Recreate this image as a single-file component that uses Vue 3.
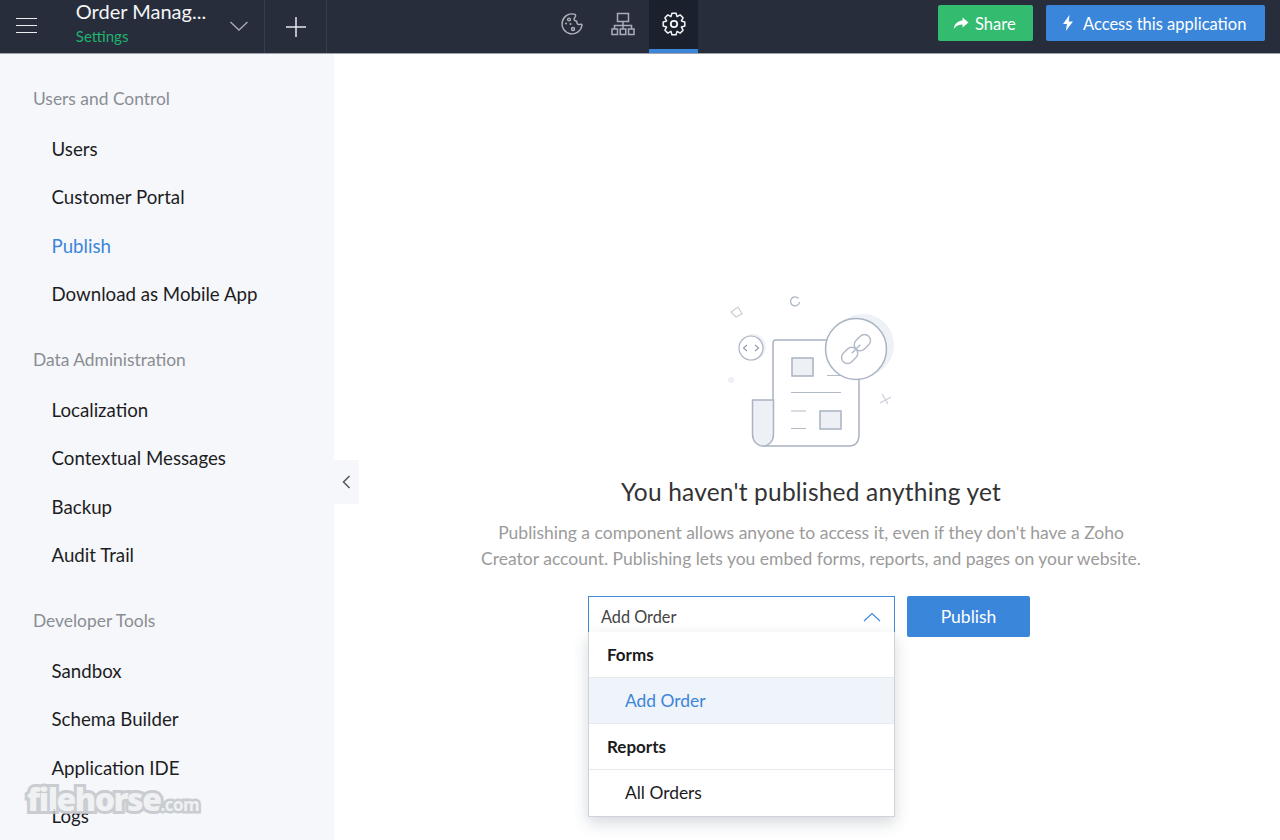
<script setup>
const groups = [
  { title: 'Users and Control', items: ['Users', 'Customer Portal', 'Publish', 'Download as Mobile App'] },
  { title: 'Data Administration', items: ['Localization', 'Contextual Messages', 'Backup', 'Audit Trail'] },
  { title: 'Developer Tools', items: ['Sandbox', 'Schema Builder', 'Application IDE', 'Logs'] },
]

// eight-toothed gear outline, centred on 12,12
function gearPath(teeth, outer, inner) {
  const step = (Math.PI * 2) / teeth
  const pts = []
  for (let i = 0; i < teeth; i++) {
    const a = i * step - Math.PI / 2
    const spread = [[-0.5, inner], [-0.24, outer], [0.24, outer], [0.5, inner]]
    for (const [k, r] of spread) {
      const t = a + k * step
      pts.push(`${(12 + r * Math.cos(t)).toFixed(2)} ${(12 + r * Math.sin(t)).toFixed(2)}`)
    }
  }
  return 'M' + pts.join('L') + 'Z'
}
const gear = gearPath(8, 11, 8)
</script>

<template>
  <div class="app">
    <header class="topbar">
      <div class="left">
        <button class="burger" aria-label="Menu"><span></span><span></span><span></span></button>
        <div class="appname">
          <div class="name">Order Manag...</div>
          <div class="sub">Settings</div>
        </div>
        <svg class="chev" width="20" height="12" viewBox="0 0 20 12"><path d="M1.500 2 L10 10 L18.500 2" fill="none" stroke="#a9adb6" stroke-width="1.300"/></svg>
        <div class="plus">
          <svg width="22" height="22" viewBox="0 0 22 22"><path d="M11 1V21M1 11H21" stroke="#e6e8ec" stroke-width="1.500"/></svg>
        </div>
      </div>

      <nav class="tabs">
        <div class="tab">
          <svg width="24" height="24" viewBox="0 0 24 24" fill="none" stroke="#b0b4bd" stroke-width="1.400">
            <path d="M15 2.300A10 10 0 1 0 22 13C21.800 12.200 21 12 20 12.300C18 13 16.800 12 17 10.500C17.200 9.300 16 8.800 15 8.500C13.800 8 13.800 6.500 14.800 5.500C15.800 4.500 16 3 15 2.300Z"/>
            <circle cx="9" cy="7.500" r="1.400"/><circle cx="6" cy="11.500" r="1" fill="#b0b4bd" stroke="none"/><circle cx="10.500" cy="12" r="1" fill="#b0b4bd" stroke="none"/><circle cx="13" cy="17" r="1.500"/>
          </svg>
        </div>
        <div class="tab">
          <svg width="24" height="24" viewBox="0 0 24 24" fill="none" stroke="#a9adb8" stroke-width="1.500">
            <rect x="6.500" y="1.500" width="11" height="8"/><path d="M12 9.500V13.500M3.500 17V13.500H20.500V17M12 13.500V17"/>
            <rect x="1" y="17" width="5.500" height="5.500"/><rect x="9.250" y="17" width="5.500" height="5.500"/><rect x="17.500" y="17" width="5.500" height="5.500"/>
          </svg>
        </div>
        <div class="tab active">
          <svg width="24" height="24" viewBox="0 0 24 24" fill="none" stroke="#f2f3f5" stroke-width="1.500" stroke-linejoin="round">
            <path :d="gear"/>
            <circle cx="12" cy="12" r="3.200" stroke-width="1.800"/>
          </svg>
        </div>
      </nav>

      <div class="actions">
        <button class="btn green">
          <svg width="16" height="13" viewBox="0 0 16 13"><path d="M9.500 0.500L15.500 5.500L9.500 10.500V7.500C6 7.500 3 8.500 0.800 12C1.300 7.500 4 4 9.500 3.500Z" fill="#fff"/></svg>
          Share
        </button>
        <button class="btn blue">
          <svg width="12" height="16" viewBox="0 0 12 16"><path d="M7.500 0L1 9H5L3.800 16L11 6.500H6.700Z" fill="#fff"/></svg>
          Access this application
        </button>
      </div>
    </header>

    <div class="body">
      <aside class="sidebar">
        <section v-for="g in groups" :key="g.title" class="group">
          <h3>{{ g.title }}</h3>
          <a v-for="i in g.items" :key="i" class="item" :class="{ current: i === 'Publish' }">{{ i }}</a>
        </section>
        <div class="collapse">
          <svg width="9" height="14" viewBox="0 0 9 14"><path d="M7.500 1L1.500 7L7.500 13" fill="none" stroke="#555" stroke-width="1.500"/></svg>
        </div>
      </aside>

      <main class="main">
        <svg class="art" width="200" height="170" viewBox="0 0 200 170" fill="none">
          <circle cx="153" cy="60" r="31" fill="#eef1f6"/>
          <circle cx="43" cy="62" r="13" fill="#f0f2f7"/>
          <circle cx="21" cy="95" r="3" fill="#eeeff6"/>
          <path d="M21 27L28 22L32 29L26 32Z" stroke="#c8ced8" stroke-width="1.200"/>
          <path d="M88.500 13.500A4.500 4.500 0 1 0 89.500 17" stroke="#a9b3c2" stroke-width="1.300"/>
          <circle cx="41" cy="63" r="12" fill="#fff" stroke="#a9b3c2" stroke-width="1.200"/>
          <path d="M37 60L33.500 63L37 66M45 60L48.500 63L45 66" stroke="#8f9bac" stroke-width="1.100"/>
          <path d="M63 115V60C63 56 63.500 55 66 55H145C148 55 149 57 149 60V149C149 156 146 161 139 161H53" fill="#fff" stroke="#a9b3c2" stroke-width="1.500"/>
          <path d="M42.500 115H63.500V149C63.500 156 59 161 53 161C47 161 42.500 156 42.500 149Z" fill="#edf0f5" stroke="#a9b3c2" stroke-width="1.500"/>
          <rect x="82" y="73" width="21" height="18" fill="#edf0f5" stroke="#a9b3c2" stroke-width="1.500"/>
          <rect x="110" y="126" width="21" height="18" fill="#edf0f5" stroke="#a9b3c2" stroke-width="1.500"/>
          <path d="M81 107.500H131M81 126H96M81 143.500H96M117 90.500H132" stroke="#b3bbc8" stroke-width="1.200"/>
          <circle cx="146" cy="64" r="30.500" fill="#fff" stroke="#a9b3c2" stroke-width="1.500"/>
          <g stroke="#b3bbc8" stroke-width="1.500" transform="rotate(-45 146 64)">
            <rect x="128" y="58" width="18" height="12" rx="6"/>
            <rect x="146" y="58" width="18" height="12" rx="6"/>
            <path d="M140 64H152"/>
          </g>
          <path d="M172 109L178 119M170 118L181 112" stroke="#c8ced8" stroke-width="1.200"/>
        </svg>

        <h1>You haven't published anything yet</h1>
        <p>Publishing a component allows anyone to access it, even if they don't have a Zoho<br>Creator account. Publishing lets you embed forms, reports, and pages on your website.</p>

        <div class="controls">
          <div class="select">
            <span>Add Order</span>
            <svg width="18" height="10" viewBox="0 0 18 10"><path d="M1 9L9 1.500L17 9" fill="none" stroke="#3f8bdc" stroke-width="1.200"/></svg>
            <div class="menu">
              <div class="row head">Forms</div>
              <div class="row opt sel">Add Order</div>
              <div class="row head">Reports</div>
              <div class="row opt">All Orders</div>
            </div>
          </div>
          <button class="publish">Publish</button>
        </div>
      </main>
    </div>

    <div class="watermark">filehorse<small>.com</small></div>
  </div>
</template>

<style>
body { margin: 0; background: #fff; }
</style>

<style scoped>
.app { width: 1280px; height: 840px; overflow: hidden; position: relative; font-family: Lato, "Liberation Sans", sans-serif; display: flex; flex-direction: column; }
.topbar { height: 53px; flex: none; background: #282d3c; border-bottom: 1px solid #9fa3ac; display: flex; }
.left { display: flex; align-items: stretch; width: 327px; flex: none; }
.burger { width: 76px; background: none; border: 0; padding: 0 0 2px 16px; display: flex; flex-direction: column; justify-content: center; gap: 5.500px; }
.burger span { display: block; width: 21px; height: 1.500px; background: #eceef1; }
.appname { width: 150px; margin-top: -1px; }
.name { color: #f4f5f6; font-size: 20px; line-height: 24px; white-space: nowrap; }
.sub { color: #1fb36d; font-size: 15px; line-height: 18px; margin-top: 4px; }
.chev { align-self: center; margin-left: 4px; margin-top: -1px; }
.plus { margin-left: 15px; width: 61px; display: flex; align-items: center; justify-content: center; border-left: 1px solid #383e50; border-right: 1px solid #383e50; }
.tabs { display: flex; gap: 2px; margin-left: 220px; }
.tab { width: 49px; display: flex; align-items: center; justify-content: center; padding-bottom: 6px; box-sizing: border-box; }
.tab.active { background: #1b202d; border-bottom: 4px solid #3b86d9; padding-bottom: 2px; }
.actions { display: flex; margin-left: auto; gap: 13px; padding: 5px 15px 0 0; align-items: flex-start; }
.btn { height: 36px; border: 0; border-radius: 2px; color: #fff; font: 16.500px Lato, sans-serif; display: flex; align-items: center; gap: 6px; padding: 2px 15px 0; white-space: nowrap; box-sizing: border-box; }
.btn svg { margin-top: -2px; }
.green { background: #33bb70; width: 95px; }
.blue { background: #3a86da; width: 219px; gap: 9px; padding-left: 16px; }
.body { flex: 1; display: flex; min-height: 0; }
.sidebar { width: 334px; flex: none; background: #f5f7fb; padding-top: 32px; box-sizing: border-box; position: relative; }
.group { margin-bottom: 28.400px; }
.group h3 { margin: 0 0 13px 33px; height: 26px; font-size: 17.400px; line-height: 26px; font-weight: 400; color: #8a8d93; }
.item { display: block; height: 48.400px; line-height: 48.400px; padding-left: 51.500px; font-size: 18.700px; color: #1d1d1f; white-space: nowrap; }
.item.current { color: #3b86d9; }
.collapse { position: absolute; left: 334px; top: 406px; width: 25px; height: 44px; background: #f5f7fb; display: flex; align-items: center; justify-content: center; }
.main { flex: 1; display: flex; flex-direction: column; align-items: center; padding: 231px 0 0 8px; min-width: 0; }
.art { display: block; margin-left: -2px; }
h1 { margin: 21px 0 0; font-size: 24.500px; line-height: 32px; font-weight: 400; color: #333; letter-spacing: 0.2px; }
p { margin: 12px 0 0; font-size: 17.500px; line-height: 26px; color: #9b9b9b; text-align: center; white-space: nowrap; }
.controls { display: flex; gap: 12px; margin: 24px 0 0 -4px; align-items: flex-start; }
.select { width: 307px; height: 41px; box-sizing: border-box; border: 1px solid #3f8bdc; display: flex; align-items: center; justify-content: space-between; padding: 0 13px 0 12px; font-size: 16.300px; color: #444; position: relative; background: #fff; }
.menu { position: absolute; left: -1px; right: -1px; top: 35px; background: #fff; border: 1px solid #cfd2da; border-top: 0; box-shadow: 0 6px 14px rgba(70, 80, 100, .22); z-index: 2; }
.row { height: 46px; line-height: 46px; box-sizing: border-box; white-space: nowrap; border-bottom: 1px solid #e8e9ed; }
.row:last-child { border-bottom: 0; }
.head { padding-left: 18px; font-weight: 700; color: #1b1b1d; font-size: 17px; }
.opt { padding-left: 36px; color: #1b1b1d; font-size: 17.400px; }
.sel { background: #eff3fa; color: #3b86d9; }
.publish { width: 123px; height: 41px; background: #3a86da; color: #fff; border: 0; border-radius: 2px; font: 17.500px Lato, sans-serif; }
.watermark { position: absolute; left: 27px; top: 780px; font: 800 32px/38px "Open Sans", sans-serif; letter-spacing: -1.500px; color: #eef0f2; -webkit-text-stroke: 6px #c2c6ca; paint-order: stroke fill; opacity: .85; white-space: nowrap; }
.watermark small { font-size: 17px; font-weight: 700; letter-spacing: -0.500px; -webkit-text-stroke: 5px #c2c6ca; }
</style>
